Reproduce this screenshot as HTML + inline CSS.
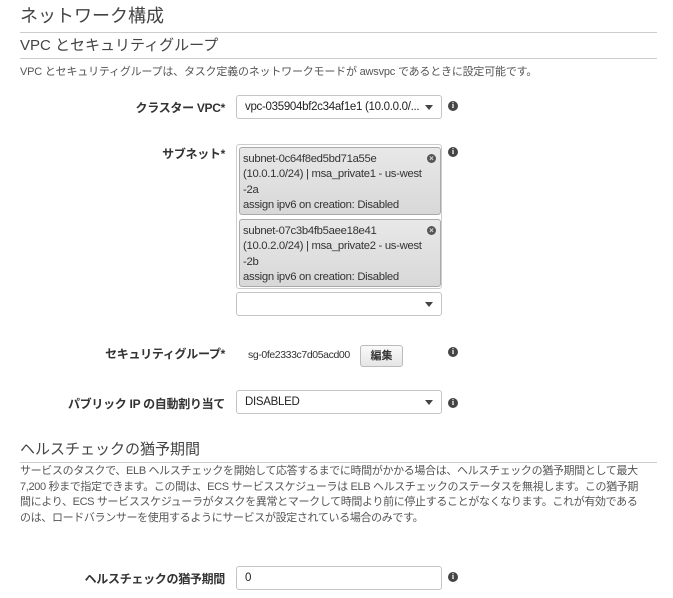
<!DOCTYPE html>
<html><head><meta charset="utf-8"><style>
*{box-sizing:border-box;margin:0;padding:0}
body{width:673px;height:598px;background:#fff;font-family:"Liberation Sans","Noto Sans CJK JP",sans-serif;color:#333;position:relative;overflow:hidden}
.a{position:absolute;white-space:nowrap}
.h1{font-size:18px;color:#444;line-height:22px}
.h2{font-size:15px;color:#444;line-height:18px}
.line{position:absolute;left:20px;width:637px;height:1px;background:#ccc}
.small{font-size:11px;color:#555}
.lbl{font-size:12px;font-weight:bold;color:#333;text-align:right;width:225px;left:0;letter-spacing:-0.3px}
.sel{position:absolute;left:236px;width:206px;height:24px;border:1px solid #c4c4c4;border-radius:3px;background:#fff;font-size:11.5px;padding:5px 8px;color:#222;white-space:nowrap;overflow:hidden;letter-spacing:-0.3px}
.sel .arr{position:absolute;right:8px;top:9px;width:0;height:0;border-left:4.5px solid transparent;border-right:4.5px solid transparent;border-top:5px solid #444}
.info{position:absolute;width:10px;height:10px;border-radius:50%;background:#444;color:#fff;font-size:8px;font-weight:bold;text-align:center;line-height:10px;font-family:"Liberation Serif",serif}
.chip{position:absolute;left:239px;width:202px;height:68px;border:1px solid #aaa;border-radius:3px;background:linear-gradient(#e8e8e8,#d8d8d8);font-size:11.3px;line-height:15.3px;padding:4px 3px;color:#333;white-space:nowrap;letter-spacing:-0.3px;overflow:hidden}
.x{position:absolute;right:4px;top:6px;width:9px;height:9px;border-radius:50%;background:#555;color:#ddd;font-size:8px;line-height:9px;text-align:center;font-weight:bold;letter-spacing:0}
</style></head><body>
<div class="a h1" style="left:20px;top:5px">ネットワーク構成</div>
<div class="line" style="top:32px"></div>
<div class="a h2" style="left:20px;top:37px">VPC とセキュリティグループ</div>
<div class="line" style="top:58px"></div>
<div class="a small" style="left:20px;top:63px;letter-spacing:-0.2px">VPC とセキュリティグループは、タスク定義のネットワークモードが awsvpc であるときに設定可能です。</div>

<div class="a lbl" style="top:99px">クラスター VPC*</div>
<div class="sel" style="top:95px">vpc-035904bf2c34af1e1 (10.0.0.0/...<span class="arr"></span></div>
<div class="info" style="left:448px;top:101px">i</div>

<div class="a lbl" style="top:145px">サブネット*</div>
<div style="position:absolute;left:236px;top:144px;width:206px;height:145px;border:1px solid #ccc;border-radius:3px"></div>
<div class="chip" style="top:147px">subnet-0c64f8ed5bd71a55e<br>(10.0.1.0/24) | msa_private1 - us-west<br>-2a<br>assign ipv6 on creation: Disabled<span class="x">×</span></div>
<div class="chip" style="top:219px">subnet-07c3b4fb5aee18e41<br>(10.0.2.0/24) | msa_private2 - us-west<br>-2b<br>assign ipv6 on creation: Disabled<span class="x">×</span></div>
<div class="info" style="left:448px;top:147px">i</div>
<div class="sel" style="top:292px"><span class="arr"></span></div>

<div class="a lbl" style="top:345px">セキュリティグループ*</div>
<div class="a" style="left:248px;top:349px;font-size:10.5px;color:#333;letter-spacing:-0.4px">sg-0fe2333c7d05acd00</div>
<div style="position:absolute;left:360px;top:345px;width:43px;height:22px;border:1px solid #bbb;border-radius:3px;background:linear-gradient(#fafafa,#e6e6e6);font-size:11px;font-weight:bold;text-align:center;line-height:20px">編集</div>
<div class="info" style="left:448px;top:347px">i</div>

<div class="a lbl" style="top:395px">パブリック IP の自動割り当て</div>
<div class="sel" style="top:390px">DISABLED<span class="arr"></span></div>
<div class="info" style="left:448px;top:398px">i</div>

<div class="a h2" style="left:20px;top:441px">ヘルスチェックの猶予期間</div>
<div class="line" style="top:462px"></div>
<div class="a small" style="left:20px;top:464px;line-height:15.5px;letter-spacing:-0.35px">サービスのタスクで、ELB ヘルスチェックを開始して応答するまでに時間がかかる場合は、ヘルスチェックの猶予期間として最大<br>7,200 秒まで指定できます。この間は、ECS サービススケジューラは ELB ヘルスチェックのステータスを無視します。この猶予期<br>間により、ECS サービススケジューラがタスクを異常とマークして時間より前に停止することがなくなります。これが有効である<br>のは、ロードバランサーを使用するようにサービスが設定されている場合のみです。</div>

<div class="a lbl" style="top:570px">ヘルスチェックの猶予期間</div>
<div class="sel" style="top:566px">0</div>
<div class="info" style="left:448px;top:572px">i</div>
</body></html>
